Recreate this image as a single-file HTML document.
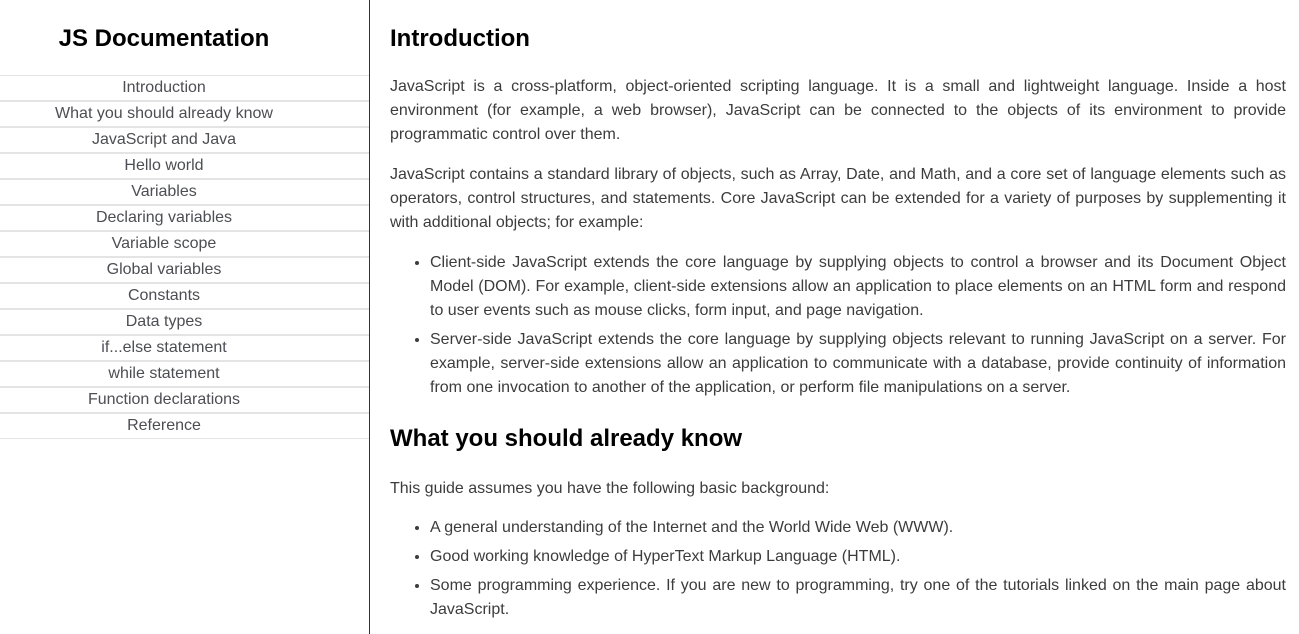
<!DOCTYPE html>
<html><head><style>
*{box-sizing:border-box}
body{margin:0;font-family:"Liberation Sans",Arial,sans-serif;color:#4d4e53;width:1299px;height:634px;overflow:hidden;background:#fff}
nav{position:fixed;left:0;top:0;width:370px;height:634px;border-right:1px solid #333}
nav h1{margin:0;height:75px;line-height:78px;text-align:center;font-size:24px;color:#000;padding-right:41px}
nav a{display:block;height:26px;line-height:24px;text-align:center;font-size:16px;color:#4d4e53;border-top:1px solid #e4e4e4;border-bottom:1px solid #e4e4e4;text-decoration:none;padding-right:41px}
main{position:absolute;left:390px;top:0;width:896px;color:#3c3c3c}
h2{font-size:24px;color:#000;margin:0;line-height:30px}
p{margin:0;font-size:16px;line-height:24px;text-align:justify}
ul{margin:0;padding-left:40px}
li{font-size:16px;line-height:24px;text-align:justify;margin-bottom:5px}
</style></head><body>
<nav><h1>JS Documentation</h1>
<a>Introduction</a><a>What you should already know</a><a>JavaScript and Java</a><a>Hello world</a><a>Variables</a><a>Declaring variables</a><a>Variable scope</a><a>Global variables</a><a>Constants</a><a>Data types</a><a>if...else statement</a><a>while statement</a><a>Function declarations</a><a>Reference</a>
</nav>
<main>
<h2 style="margin-top:24px">Introduction</h2>
<p style="margin-top:21px">JavaScript is a cross-platform, object-oriented scripting language. It is a small and lightweight language. Inside a host environment (for example, a web browser), JavaScript can be connected to the objects of its environment to provide programmatic control over them.</p>
<p style="margin-top:16px">JavaScript contains a standard library of objects, such as Array, Date, and Math, and a core set of language elements such as operators, control structures, and statements. Core JavaScript can be extended for a variety of purposes by supplementing it with additional objects; for example:</p>
<ul style="margin-top:16px">
<li>Client-side JavaScript extends the core language by supplying objects to control a browser and its Document Object Model (DOM). For example, client-side extensions allow an application to place elements on an HTML form and respond to user events such as mouse clicks, form input, and page navigation.</li>
<li>Server-side JavaScript extends the core language by supplying objects relevant to running JavaScript on a server. For example, server-side extensions allow an application to communicate with a database, provide continuity of information from one invocation to another of the application, or perform file manipulations on a server.</li>
</ul>
<h2 style="margin-top:24px">What you should already know</h2>
<p style="margin-top:23px">This guide assumes you have the following basic background:</p>
<ul style="margin-top:15px">
<li>A general understanding of the Internet and the World Wide Web (WWW).</li>
<li>Good working knowledge of HyperText Markup Language (HTML).</li>
<li>Some programming experience. If you are new to programming, try one of the tutorials linked on the main page about JavaScript.</li>
</ul>
</main>
</body></html>
